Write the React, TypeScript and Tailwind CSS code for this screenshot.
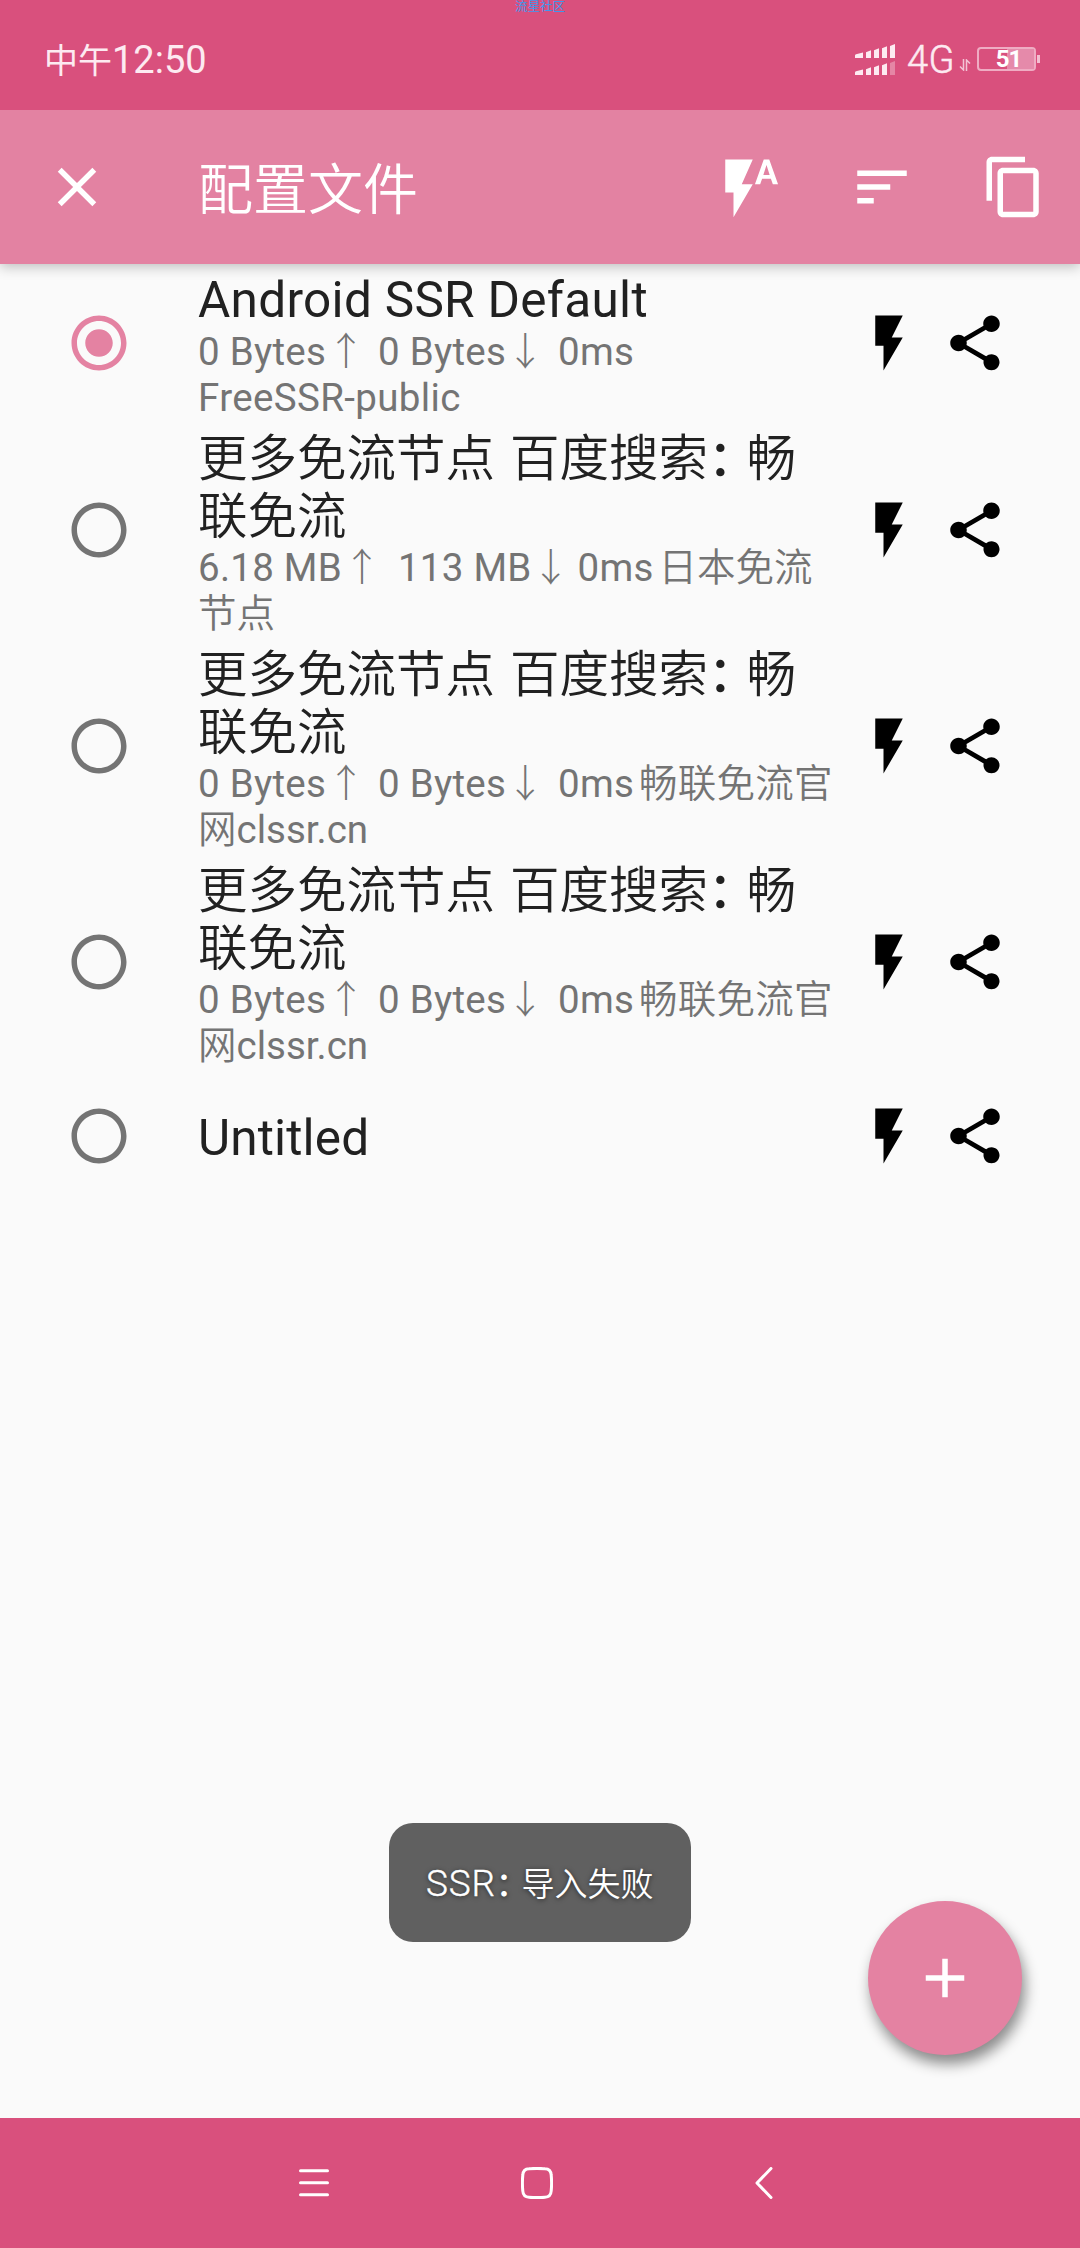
import type { ReactNode } from "react";

function Icon({ d, className = "" }: { d: string; className?: string }) {
  return (
    <svg viewBox="0 0 24 24" className={`size-[66px] shrink-0 ${className}`} fill="currentColor">
      <path d={d} />
    </svg>
  );
}

const CLOSE = "M19 6.41L17.59 5 12 10.59 6.41 5 5 6.41 10.59 12 5 17.59 6.41 19 12 13.41 17.59 19 19 17.59 13.41 12z";
const FLASH_AUTO = "M3 2v12h3v9l7-12H9l4-9H3zm16 0h-2l-3.2 9h1.9l.7-2h3.2l.7 2h1.9L19 2zm-2.15 5.65L18 4l1.15 3.65h-2.3z";
const SORT = "M3 18h6v-2H3v2zM3 6v2h18V6H3zm0 7h12v-2H3v2z";
const COPY = "M16 1H4c-1.1 0-2 .9-2 2v14h2V3h12V1zm3 4H8c-1.1 0-2 .9-2 2v14c0 1.1.9 2 2 2h11c1.1 0 2-.9 2-2V7c0-1.1-.9-2-2-2zm0 16H8V7h11v14z";
const FLASH = "M7 2v11h3v9l7-12h-4l4-8z";
const SHARE = "M18 16.08c-.76 0-1.44.3-1.96.77L8.91 12.7c.05-.23.09-.46.09-.7s-.04-.47-.09-.7l7.05-4.11c.54.5 1.25.81 2.04.81 1.66 0 3-1.34 3-3s-1.34-3-3-3-3 1.34-3 3c0 .24.04.47.09.7L8.04 9.81C7.5 9.31 6.79 9 6 9c-1.66 0-3 1.34-3 3s1.34 3 3 3c.79 0 1.5-.31 2.04-.81l7.12 4.16c-.05.21-.08.43-.08.65 0 1.61 1.31 2.92 2.92 2.92s2.92-1.31 2.92-2.92-1.31-2.92-2.92-2.92z";
const RADIO_OFF = "M12 2C6.48 2 2 6.48 2 12s4.48 10 10 10 10-4.48 10-10S17.52 2 12 2zm0 18c-4.42 0-8-3.58-8-8s3.58-8 8-8 8 3.58 8 8-3.58 8-8 8z";
const RADIO_ON = "M12 7c-2.76 0-5 2.24-5 5s2.24 5 5 5 5-2.24 5-5-2.24-5-5-5z" + RADIO_OFF;
const ADD = "M19 13h-6v6h-2v-6H5v-2h6V5h2v6h6v2z";

function SignalRow({ weak = false }: { weak?: boolean }) {
  return (
    <svg viewBox="0 0 40 14" className="h-[14px] w-[40px]" fill="#fdeaf1">
      <path d="M0 14v-2.5Q0 10.500 1 10.200L8 8.600V14zM11 14V8.200L16 6.300V14zM19 14V6.200L24 4.300V14zM27 14V4.200L32 2.200V14z" />
      <path d="M35 14V2L40 0V14z" opacity={weak ? 0.35 : 1} />
    </svg>
  );
}

function StatusBar() {
  return (
    <header className="relative z-20 flex h-[110px] shrink-0 items-center justify-between bg-[#d9507d] pl-[44px] pr-[40px] pt-[8px] text-[#fdeaf1]">
      <span className="absolute left-[515px] top-0 text-[12.500px] leading-[13px] text-[#3d98ee]">流星社区</span>
      <div className="flex items-baseline whitespace-nowrap pt-[2px] leading-[46px]">
        <span className="text-[34px]">中午</span>
        <span className="text-[38px]">12:50</span>
      </div>
      <div className="flex items-center">
        <div className="flex flex-col gap-[3px]">
          <SignalRow />
          <SignalRow weak />
        </div>
        <span className="ml-[12px] pt-[2px] text-[38px] font-light leading-[46px] tracking-[0.500px] [-webkit-text-stroke:0.500px_#fdeaf1]">4G</span>
        <svg viewBox="0 0 12 12" className="ml-[4px] mt-[12px] size-[12px]" fill="none" stroke="#f3c3d5" strokeWidth="1.500">
          <path d="M4.500 0v11L1 7.500M7.500 12V1L11 4.500" />
        </svg>
        <div className="ml-[6px] flex items-center">
          <div className="relative flex h-[24px] w-[59px] items-center justify-center rounded-[4px] border-2 border-[#efacc3]">
            <div className="absolute inset-y-0 right-0 w-[27px] bg-[#e58aaa]" />
            <span className="relative ml-[4px] text-[24px] font-bold leading-[20px] tracking-[-1px] text-white">51</span>
          </div>
          <div className="ml-px h-[8px] w-[3px] bg-[#f3bfd1]" />
        </div>
      </div>
    </header>
  );
}

function Toolbar() {
  return (
    <div className="relative z-10 flex h-[154px] shrink-0 items-center bg-[#e382a2] pl-[44px] pr-[33px] text-white shadow-[0_3px_12px_rgba(0,0,0,0.240)]">
      <Icon d={CLOSE} />
      <h1 className="ml-[88px] flex-1 pt-[5px] text-[55px] font-[350] leading-[64px]">配置文件</h1>
      <div className="flex gap-[66px]">
        <Icon d={FLASH_AUTO} />
        <Icon d={SORT} />
        <Icon d={COPY} />
      </div>
    </div>
  );
}

/* Full-width colon tightened to roughly three quarters of an em. */
function Colon() {
  return <span className="font-medium tracking-[-0.220em]">：</span>;
}

function Arrow({ children, className }: { children: string; className: string }) {
  return <span className={`inline-block text-center font-light tracking-normal ${className}`}>{children}</span>;
}

function Row({
  title,
  summary,
  selected = false,
  className,
  titleClassName = "",
}: {
  title: ReactNode;
  summary?: ReactNode;
  selected?: boolean;
  className: string;
  titleClassName?: string;
}) {
  return (
    <li className={`flex items-center pl-[66px] pr-[72px] ${className}`}>
      <Icon d={selected ? RADIO_ON : RADIO_OFF} className={selected ? "text-[#e482a2]" : "text-[#747474]"} />
      <div className="ml-[66px] w-[658px] shrink-0 whitespace-nowrap pt-[6px]">
        <div className={`text-[49.500px] leading-[58px] text-[#212121] ${titleClassName}`}>{title}</div>
        {summary && <div className="text-[38.500px] leading-[46px] text-[#747474]">{summary}</div>}
      </div>
      <Icon d={FLASH} className="text-black" />
      <Icon d={SHARE} className="ml-[20px] text-black" />
    </li>
  );
}

function LongTitle() {
  return (
    <span className="font-[350]">
      更多免流节点<span className="tracking-[3px]"> </span>百度搜索
      <Colon />畅
      <br />
      联免流
    </span>
  );
}

function ZeroTraffic() {
  return (
    <span className="tracking-[0.250px]">
      0 Bytes<Arrow className="mr-[12px] w-[40px]">↑</Arrow>0 Bytes<Arrow className="mr-[14px] w-[38px]">↓</Arrow>0ms
    </span>
  );
}

function SiteSummary() {
  return (
    <>
      <ZeroTraffic />
      <span className="ml-[5px] font-[350] tracking-[0.200px]">畅联免流官</span>
      <br />
      <span className="font-[350]">网</span>clssr.cn
    </>
  );
}

export default function App() {
  return (
    <div className="relative flex h-[2248px] w-[1080px] flex-col overflow-hidden bg-[#fafafa] font-[Roboto,'Noto_Sans_CJK_SC',sans-serif]">
      <StatusBar />
      <Toolbar />
      <main className="flex-1">
        <ul>
          <Row
            className="h-[158px]"
            selected
            titleClassName="tracking-[0.300px]"
            title="Android SSR Default"
            summary={
              <>
                <ZeroTraffic />
                <br />
                <span className="tracking-[0.350px]">FreeSSR-public</span>
              </>
            }
          />
          <Row
            className="h-[216px]"
            titleClassName="mt-[1px] -mb-[1px]"
            title={<LongTitle />}
            summary={
              <>
                <span className="tracking-[0.250px]">
                  6.18 MB<Arrow className="mr-[16px] w-[40px]">↑</Arrow>113 MB<Arrow className="mr-[8px] w-[38px]">↓</Arrow>0ms
                </span>
                <span className="ml-[5px] font-[350]">日本免流</span>
                <br />
                <span className="font-[350]">节点</span>
              </>
            }
          />
          <Row className="h-[216px]" titleClassName="mt-[1px] -mb-[1px]" title={<LongTitle />} summary={<SiteSummary />} />
          <Row className="h-[216px]" titleClassName="mt-[1px] -mb-[1px]" title={<LongTitle />} summary={<SiteSummary />} />
          <Row className="h-[132px]" titleClassName="-mt-[1px] mb-[1px] tracking-[0.150px]" title="Untitled" />
        </ul>
      </main>
      <nav className="flex h-[130px] shrink-0 items-center bg-[#d9507d] pl-[299px] text-white">
        <svg viewBox="0 0 30 32" className="h-[32px] w-[30px]" stroke="currentColor" strokeWidth="3" strokeLinecap="round">
          <path d="M1.500 3.800h27M1.500 15.800h27M1.500 27.800h27" />
        </svg>
        <svg viewBox="0 0 32 32" className="ml-[192px] size-[32px]" fill="none" stroke="currentColor" strokeWidth="3">
          <path d="M8 1.800Q16 1 24 1.800Q29.800 2 30.200 8Q31 16 30.200 24Q29.800 30 24 30.200Q16 31 8 30.200Q2.200 30 1.800 24Q1 16 1.800 8Q2.200 2 8 1.800z" />
        </svg>
        <svg viewBox="0 0 18 32" className="ml-[202px] h-[32px] w-[18px]" fill="none" stroke="currentColor" strokeWidth="3" strokeLinecap="round" strokeLinejoin="round">
          <path d="M16 1.500L2 16l14 14.500" />
        </svg>
      </nav>

      <div className="absolute left-[389px] top-[1823px] flex h-[119px] w-[302px] items-center whitespace-nowrap rounded-[24px] bg-[#606060] pl-[37px] pt-[3px] text-white [text-shadow:0_1px_5px_rgba(0,0,0,0.600)]">
        <div className="flex items-baseline">
          <span className="text-[37px] font-light tracking-[0.800px] [-webkit-text-stroke:0.400px_white]">SSR</span>
          <span className="text-[33px] font-[350]">
            <Colon />
            导入失败
          </span>
        </div>
      </div>
      <button className="absolute left-[868px] top-[1901px] flex size-[154px] items-center justify-center rounded-full bg-[#e482a2] text-white shadow-[3px_9px_14px_rgba(0,0,0,0.450)]">
        <Icon d={ADD} />
      </button>
    </div>
  );
}
